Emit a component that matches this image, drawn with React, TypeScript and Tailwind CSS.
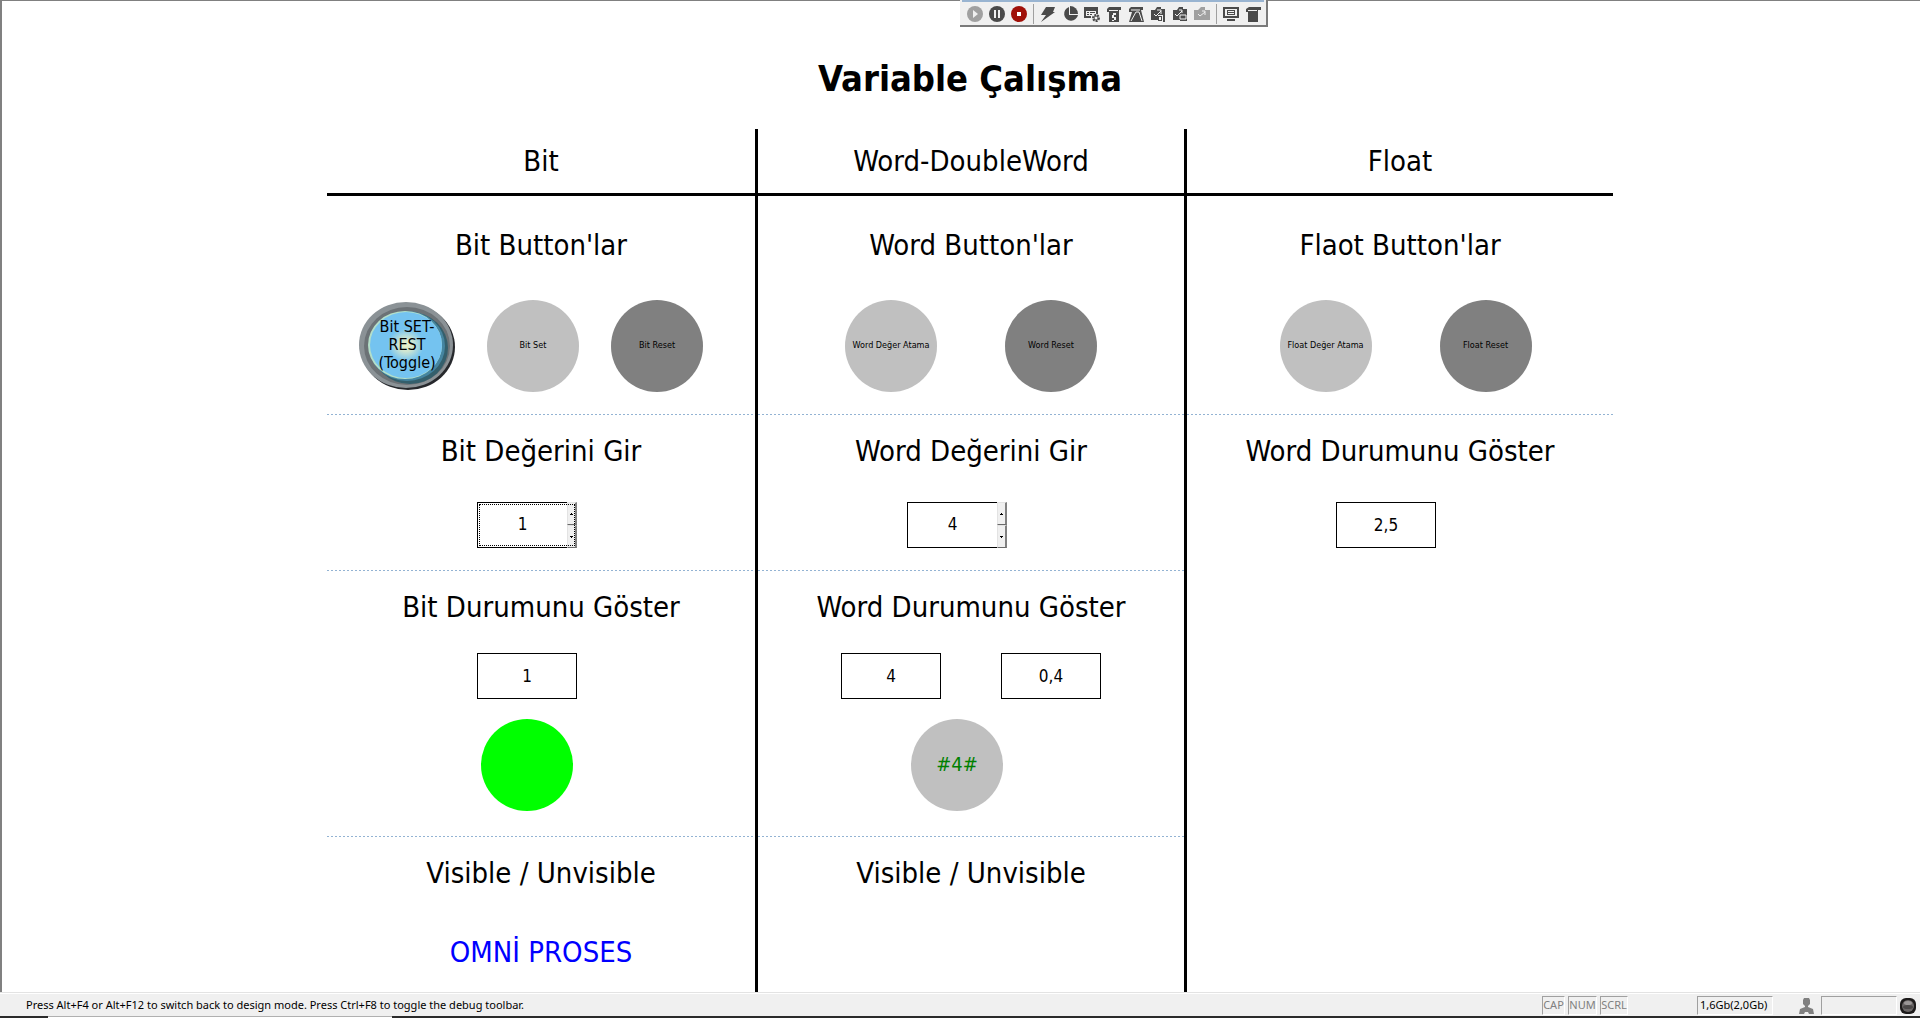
import type { ReactNode } from "react";

const G = "#4a4a4a";

function ToolButton({ label, children }: { label: string; children: ReactNode }) {
  return (
    <button type="button" aria-label={label} className="flex h-5 w-[22px] shrink-0 items-center justify-center">
      <svg width="16" height="16" viewBox="0 0 16 16" fill={G}>
        {children}
      </svg>
    </button>
  );
}

function Separator() {
  return <div className="mx-[3px] h-5 w-px shrink-0 bg-[#a0a0a0]" />;
}

function DebugToolbar() {
  return (
    <div className="absolute -top-px left-[958px] border-r-2 border-b-2 border-[#7a7a7a] bg-[#f0f0f0] pb-px">
      <div className="mx-0.5 h-0.5 bg-[#99b4d1]" />
      <div className="flex items-center pt-0.5 pr-0.5 pl-1">
        <ToolButton label="Run">
          <circle cx="8" cy="8" r="8" fill="#a0a0a0" />
          <path d="M6 4l5 4-5 4z" fill="#f0f0f0" />
        </ToolButton>
        <ToolButton label="Pause">
          <circle cx="8" cy="8" r="8" />
          <path d="M5 4h2v8H5zM9 4h2v8H9z" fill="#f0f0f0" />
        </ToolButton>
        <ToolButton label="Stop">
          <circle cx="8" cy="8" r="8" fill="#a01008" />
          <path d="M6 6h4v4H6z" fill="#fff" />
        </ToolButton>
        <Separator />
        <ToolButton label="Execute">
          <path d="M6 1h9l-2 5h2L1 16l5-7H1z" />
        </ToolButton>
        <ToolButton label="Statistics">
          <path d="M7 1a7 7 0 1 0 9 8H7z" />
          <path d="M8 0a8 8 0 0 1 8 8H8z" />
        </ToolButton>
        <ToolButton label="Watch list settings">
          <path d="M0 1h14v7h-2V5H2v5h5v2H0z" />
          <path d="M3 6h2v1H3zM6 6h5v1H6zM3 8h2v1H3zM6 8h2v1H6z" />
          <circle cx="12" cy="12" r="3" fill="none" stroke={G} strokeWidth="2" strokeDasharray="2 1" />
          <circle cx="12" cy="12" r="2" fill="none" stroke={G} />
        </ToolButton>
        <ToolButton label="Script watch">
          <path d="M3 1h12v3h-2v12H3V6H1V3z" />
          <path d="M3 4h9v1H3zM7 7h3v2H7zM6 9h2v3H6zM8 11h2v3H8zM6 14h2v1H6z" fill="#f0f0f0" />
        </ToolButton>
        <ToolButton label="Script trace">
          <path d="M3 1h12v3h-2l3 12H1l3-10H1V3z" />
          <path d="M3 15l5-9h3l3 9M3 4h9" fill="none" stroke="#f0f0f0" />
        </ToolButton>
        <ToolButton label="Import values">
          <path d="M1 4h4l2-3h4v2h4v6H8v5H1z" />
          <path d="M4 8l2 2 5-5M7 4h4v4" fill="none" stroke="#f0f0f0" />
          <path d="M8 10h4v5H8zM13 9h2v7h-2z" />
          <path d="M9 11h2v3H9z" fill="#f0f0f0" />
        </ToolButton>
        <ToolButton label="Import screen">
          <path d="M1 4h4l2-3h4v2h4v12H8v-1H1z" />
          <path d="M3 8l2 2 5-5M7 4h3v3M8 9h6v4H8z" fill="none" stroke="#f0f0f0" />
        </ToolButton>
        <ToolButton label="Import">
          <path d="M0 4h4l3-3h4v3h5v10H0z" fill="#a0a0a0" />
          <path d="M4 8l2 2 5-4M8 5h3v4" fill="none" stroke="#f0f0f0" />
        </ToolButton>
        <Separator />
        <ToolButton label="Screen">
          <path d="M0 1h16v11H0zM4 13h8v2H4z" />
          <path d="M2 3h12v7H2z" fill="#f0f0f0" />
          <path d="M4 4h8v5H4z" />
          <path d="M5 5h6v1H5zM5 7h6v1H5z" fill="#f0f0f0" />
        </ToolButton>
        <ToolButton label="Script">
          <path d="M4 1h12v3h-3v12H3V6H1V3z" />
          <path d="M3 4h9v1H3z" fill="#f0f0f0" />
        </ToolButton>
      </div>
    </div>
  );
}

function Heading({ children }: { children: ReactNode }) {
  return <h2 className="text-center text-[29px] leading-9 whitespace-nowrap">{children}</h2>;
}

function RoundButton({ label, dark }: { label: string; dark?: boolean }) {
  return (
    <button
      type="button"
      className={`${dark ? "bg-[#808080]" : "bg-[#c0c0c0]"} size-[92px] shrink-0 rounded-full text-[9px] whitespace-nowrap`}
    >
      {label}
    </button>
  );
}

function ToggleButton() {
  return (
    <button type="button" className="relative h-[88px] w-24 shrink-0">
      <svg className="absolute inset-0" width="96" height="88" viewBox="0 0 96 88" aria-hidden="true">
        <defs>
          <radialGradient id="lamp">
            <stop offset="0" stopColor="#ecf0c4" />
            <stop offset="0.200" stopColor="#cfe6d2" />
            <stop offset="0.500" stopColor="#74c3f0" />
            <stop offset="1" stopColor="#74c3f0" />
          </radialGradient>
        </defs>
        <ellipse cx="49" cy="45" rx="47" ry="43" fill="#26282c" />
        <ellipse cx="47" cy="43" rx="47" ry="43" fill="#8b9296" />
        <ellipse cx="48" cy="44" rx="43" ry="39" fill="#6c7276" />
        <ellipse cx="51" cy="46" rx="38" ry="36" fill="#345f6c" />
        <ellipse cx="48" cy="44" rx="38" ry="35" fill="#4585a0" />
        <ellipse cx="46" cy="43" rx="37" ry="34" fill="#b4dfc9" />
        <ellipse cx="47" cy="43" rx="36" ry="33" fill="url(#lamp)" />
      </svg>
      <span className="relative block pb-0.5 text-[16px] leading-[18px]">
        Bit SET-
        <br />
        REST
        <br />
        (Toggle)
      </span>
    </button>
  );
}

function ValueBox({ label, value }: { label: string; value: string }) {
  return (
    <input
      type="text"
      readOnly
      aria-label={label}
      defaultValue={value}
      className="h-[46px] w-[100px] border border-black bg-white text-center text-[17px] outline-none"
    />
  );
}

function Spinner({ label, value, focused }: { label: string; value: string; focused?: boolean }) {
  const half =
    "flex flex-1 items-center justify-center border-t border-r-2 border-b border-l border-t-[#e3e3e3] border-r-[#808080] border-b-[#696969] border-l-[#e3e3e3] bg-[#f0f0f0]";
  return (
    <div className="relative flex h-[46px] w-[100px]">
      <input
        type="text"
        aria-label={label}
        defaultValue={value}
        className="min-w-0 flex-1 border border-r-0 border-black bg-white text-center text-[17px] outline-none"
      />
      <div className="flex w-[10px] flex-col">
        <button type="button" aria-label={`${label} +`} className={half}>
          <svg width="3" height="2" viewBox="0 0 3 2" aria-hidden="true">
            <path d="M1 0h1v1h1v1H0V1h1z" />
          </svg>
        </button>
        <button type="button" aria-label={`${label} -`} className={half}>
          <svg width="3" height="2" viewBox="0 0 3 2" aria-hidden="true">
            <path d="M0 0h3v1H2v1H1V1H0z" />
          </svg>
        </button>
      </div>
      {focused && <div className="pointer-events-none absolute inset-0.5 border border-dotted border-black" />}
    </div>
  );
}

function Dots() {
  return <div className="h-px bg-[repeating-linear-gradient(90deg,#93b3d3_0_2px,transparent_2px_4px)]" />;
}

function ButtonRow({ children }: { children: ReactNode }) {
  return <div className="mt-9 flex h-[94px] items-center justify-center">{children}</div>;
}

function StatusBar() {
  const cell = "flex h-[19px] items-center border-t border-l border-[#a0a0a0] border-r border-b border-r-white border-b-white whitespace-nowrap";
  return (
    <footer className="shrink-0 border-t border-[#e3e3e3] bg-[#f0f0f0] font-['Noto_Sans',sans-serif] text-[11px]">
      <div className="flex h-[23px] items-center border-t border-white pt-px pr-1 pl-[26px]">
        <p className="flex-1 whitespace-nowrap">
          Press Alt+F4 or Alt+F12 to switch back to design mode. Press Ctrl+F8 to toggle the debug toolbar.
        </p>
        <div className="flex items-center gap-[3px] text-[#808080]">
          <span className={`${cell} w-[23px] justify-center`}>CAP</span>
          <span className={`${cell} w-[29px] justify-center`}>NUM</span>
          <span className={`${cell} w-[28px] justify-center`}>SCRL</span>
        </div>
        <span className={`${cell} ml-[69px] w-[76px] pl-0.5`}>1,6Gb(2,0Gb)</span>
        <svg className="ml-[26px]" width="15" height="16" viewBox="0 0 15 16" fill="#808080" aria-hidden="true">
          <path d="M5 0h5l1 2v4l-2 2v1l5 2 1 5h-5l-1-2h-3l-1 2H0l1-5 5-2V8L4 6V2z" />
        </svg>
        <span className={`${cell} ml-[7px] w-[76px]`} />
        <svg className="ml-[3px]" width="16" height="16" viewBox="0 0 16 16" aria-hidden="true">
          <rect width="16" height="16" rx="6" fill="#1c1a1a" />
          <circle cx="8" cy="8" r="6" fill="#6a6666" />
          <ellipse cx="8" cy="5" rx="4" ry="2" fill="#9a9696" />
          <ellipse cx="8" cy="9" rx="5" ry="2" fill="#4a4747" />
        </svg>
      </div>
      <div className="flex h-0.5">
        <div className="w-12 bg-[#2b2b2b]" />
        <div className="w-[344px] border-t border-[#b0b0b0] bg-white" />
        <div className="flex-1 bg-[#2b2b2b]" />
      </div>
    </footer>
  );
}

export default function App() {
  return (
    <div className="flex min-h-screen flex-col bg-white font-['DejaVu_Sans_Condensed','DejaVu_Sans',sans-serif] text-black">
      <main className="relative flex flex-1 flex-col border-t border-l-2 border-[#808080] pl-[18px]">
        <DebugToolbar />
        <h1 className="mt-[56px] text-center text-[36px] leading-[44px] font-bold">Variable Çalışma</h1>
        <div className="mx-auto mt-7 grid w-full max-w-[1286px] flex-1 grid-cols-[431fr_429fr_426fr]">
          <section className="border-r-[3px] border-black">
            <div className="h-[67px] border-b-[3px] border-black pt-3.5">
              <Heading>Bit</Heading>
            </div>
            <div className="h-[218px] pt-[31px]">
              <Heading>Bit Button'lar</Heading>
              <ButtonRow>
                <div className="flex items-center gap-8 pr-5">
                  <ToggleButton />
                  <RoundButton label="Bit Set" />
                  <RoundButton label="Bit Reset" dark />
                </div>
              </ButtonRow>
            </div>
            <Dots />
            <div className="h-[155px] pt-[18px]">
              <Heading>Bit Değerini Gir</Heading>
              <div className="mt-[33px] flex justify-center pr-[28px]">
                <Spinner label="Bit" value="1" focused />
              </div>
            </div>
            <Dots />
            <div className="h-[265px] pt-[18px]">
              <Heading>Bit Durumunu Göster</Heading>
              <div className="mt-[28px] flex justify-center pr-[28px]">
                <ValueBox label="Bit" value="1" />
              </div>
              <div className="mt-5 flex justify-center pr-[28px]">
                <div className="size-[92px] rounded-full bg-[#00ff00]" />
              </div>
            </div>
            <Dots />
            <div className="pt-[18px]">
              <Heading>Visible / Unvisible</Heading>
              <p className="mt-[43px] text-center text-[29px] leading-9 text-[#0000ff]">OMNİ PROSES</p>
            </div>
          </section>
          <section className="border-r-[3px] border-black">
            <div className="h-[67px] border-b-[3px] border-black pt-3.5">
              <Heading>Word-DoubleWord</Heading>
            </div>
            <div className="h-[218px] pt-[31px]">
              <Heading>Word Button'lar</Heading>
              <ButtonRow>
                <div className="flex gap-[68px]">
                  <RoundButton label="Word Değer Atama" />
                  <RoundButton label="Word Reset" dark />
                </div>
              </ButtonRow>
            </div>
            <Dots />
            <div className="h-[155px] pt-[18px]">
              <Heading>Word Değerini Gir</Heading>
              <div className="mt-[33px] flex justify-center pr-[28px]">
                <Spinner label="Word" value="4" />
              </div>
            </div>
            <Dots />
            <div className="h-[265px] pt-[18px]">
              <Heading>Word Durumunu Göster</Heading>
              <div className="mt-[28px] flex justify-center gap-[60px]">
                <ValueBox label="Word" value="4" />
                <ValueBox label="Word / 10" value="0,4" />
              </div>
              <div className="mt-5 flex justify-center pr-[28px]">
                <div className="flex size-[92px] items-center justify-center rounded-full bg-[#c0c0c0] pb-0.5 text-xl text-[#008000]">
                  #4#
                </div>
              </div>
            </div>
            <Dots />
            <div className="pt-[18px]">
              <Heading>Visible / Unvisible</Heading>
            </div>
          </section>
          <section>
            <div className="h-[67px] border-b-[3px] border-black pt-3.5">
              <Heading>Float</Heading>
            </div>
            <div className="h-[218px] pt-[31px]">
              <Heading>Flaot Button'lar</Heading>
              <ButtonRow>
                <div className="flex gap-[68px] pl-[11px]">
                  <RoundButton label="Float Değer Atama" />
                  <RoundButton label="Float Reset" dark />
                </div>
              </ButtonRow>
            </div>
            <Dots />
            <div className="pt-[18px]">
              <Heading>Word Durumunu Göster</Heading>
              <div className="mt-[33px] flex justify-center pr-[28px]">
                <ValueBox label="Float" value="2,5" />
              </div>
            </div>
          </section>
        </div>
      </main>
      <StatusBar />
    </div>
  );
}
